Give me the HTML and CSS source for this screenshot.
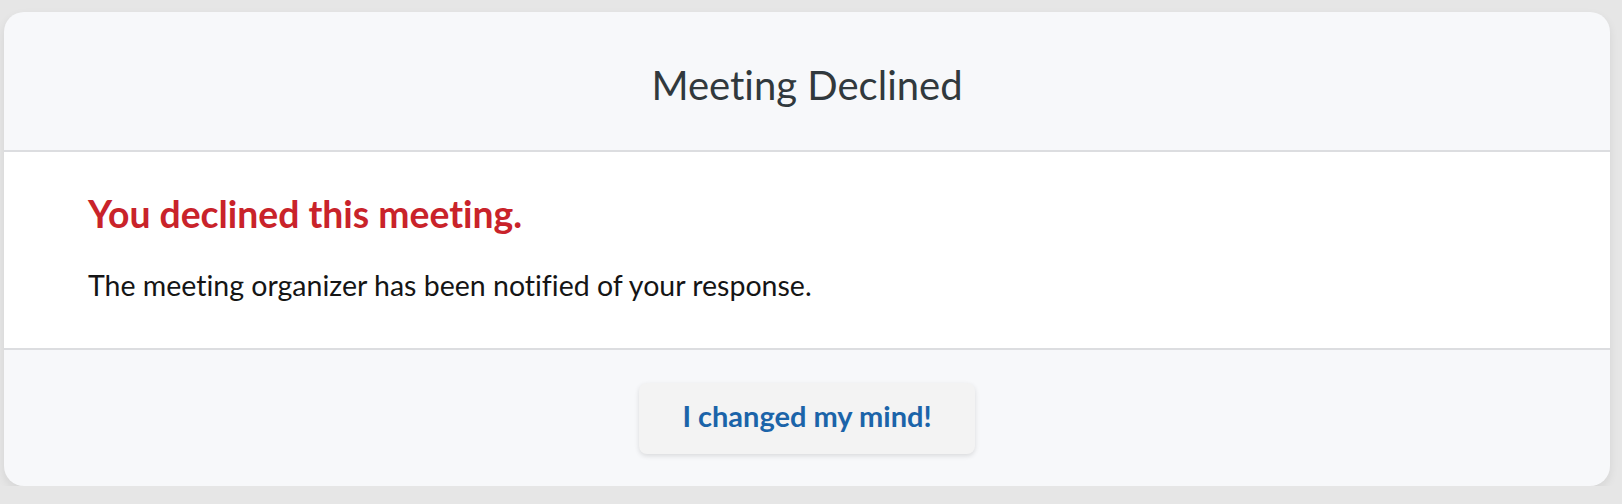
FILE: index.html
```html
<!DOCTYPE html>
<html lang="en">
<head>
<meta charset="utf-8">
<title>Meeting Declined</title>
<link rel="stylesheet" href="styles.css">
</head>
<body>
<div class="page">
  <div class="card">
    <div class="card-header">
      <h1 class="title">Meeting Declined</h1>
    </div>
    <div class="card-body">
      <h2 class="status">You declined this meeting.</h2>
      <p class="note">The meeting organizer has been notified of your response.</p>
    </div>
    <div class="card-footer">
      <button class="btn" type="button">I changed my mind!</button>
    </div>
  </div>
</div>
</body>
</html>
```
FILE: styles.css
```css
html, body {
  margin: 0;
  padding: 0;
  background: #e6e6e6;
}
body {
  font-family: "Lato", "Open Sans", sans-serif;
  font-variant-ligatures: none;
}
.page {
  padding: 12px 12px 0 4px;
}
.card {
  width: 1606px;
  height: 474px;
  background: #f7f8fa;
  border-radius: 20px;
  box-shadow: 0 4px 10px rgba(0,0,0,0.08);
  display: flex;
  flex-direction: column;
  overflow: hidden;
}
.card-header {
  box-sizing: border-box;
  height: 140px;
  padding-top: 49px;
  border-bottom: 2px solid #dcdde0;
  text-align: center;
}
.title {
  margin: 0;
  font-size: 40px;
  line-height: 48px;
  font-weight: 400;
  color: #31393d;
}
.card-body {
  box-sizing: border-box;
  height: 198px;
  background: #ffffff;
  border-bottom: 2px solid #dcdde0;
  padding: 40px 0 0 84px;
}
.status {
  margin: 0;
  font-size: 37.3px;
  line-height: 44px;
  font-weight: 700;
  color: #c9232a;
}
.note {
  margin: 32px 0 0;
  font-size: 28.5px;
  line-height: 34px;
  color: #151515;
}
.card-footer {
  flex: 1;
  display: flex;
  align-items: center;
  justify-content: center;
}
.btn {
  box-sizing: border-box;
  width: 336px;
  height: 71px;
  padding: 0 0 5px;
  border: none;
  border-radius: 8px;
  background: #f3f3f3;
  box-shadow: 0 2px 5px rgba(0,0,0,0.12);
  font-family: inherit;
  font-size: 29px;
  font-weight: 700;
  color: #1b64a9;
  cursor: pointer;
}
```
